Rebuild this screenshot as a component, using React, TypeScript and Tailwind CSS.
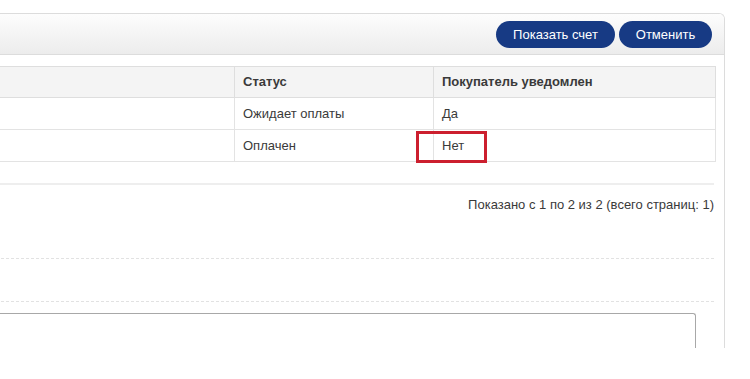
import React from "react";

export default function App() {
  const font = { fontFamily: '"Liberation Sans", Arial, sans-serif' };
  return (
    <div className="relative w-[750px] h-[379px] overflow-hidden bg-white text-[13px] text-[#3a3a3a]" style={font}>
      <div className="pt-[13px]">
        <div className="ml-[-30px] w-[755px] h-[335px] border-t border-r border-l border-[#dcdcdc] rounded-tr-[6px] overflow-hidden flex flex-col">
          <div className="h-[41px] shrink-0 flex items-center justify-end gap-[4px] pr-[12px] bg-gradient-to-b from-[#fdfdfd] to-[#ececec] border-b border-[#dcdcdc]">
            <button className="w-[119px] h-[27px] rounded-full bg-[#173a84] text-white text-[13px] leading-none">Показать счет</button>
            <button className="w-[93px] h-[27px] rounded-full bg-[#173a84] text-white text-[13px] leading-none">Отменить</button>
          </div>
          <div className="flex-1 flex flex-col pl-[10px] pr-[10px] pt-[11px]">
            <table className="w-[734px] border-collapse table-fixed">
              <colgroup>
                <col className="w-[253px]" />
                <col className="w-[199px]" />
                <col className="w-[282px]" />
              </colgroup>
              <thead>
                <tr className="h-[31px] bg-[#f4f4f4]">
                  <th className="border border-[#dedede]"></th>
                  <th className="border border-[#dedede] text-left font-bold pl-[8px]">Статус</th>
                  <th className="border border-[#dedede] text-left font-bold pl-[8px]">Покупатель уведомлен</th>
                </tr>
              </thead>
              <tbody>
                <tr className="h-[32px]">
                  <td className="border border-[#e3e3e3]"></td>
                  <td className="border border-[#e3e3e3] pl-[8px]">Ожидает оплаты</td>
                  <td className="border border-[#e3e3e3] pl-[8px]">Да</td>
                </tr>
                <tr className="h-[32px]">
                  <td className="border border-[#e3e3e3]"></td>
                  <td className="border border-[#e3e3e3] pl-[8px]">Оплачен</td>
                  <td className="border border-[#e3e3e3] pl-[8px]">Нет</td>
                </tr>
              </tbody>
            </table>
            <div className="mt-[21px] border-t-2 border-[#eeeeee]"></div>
            <div className="mt-[11px] h-[18px] leading-[18px] text-right text-[13px]">Показано с 1 по 2 из 2 (всего страниц: 1)</div>
            <div className="mt-[44px] border-t border-dashed border-[#e2e2e2]"></div>
            <div className="mt-[42px] border-t border-dashed border-[#e2e2e2]"></div>
            <div className="mt-[11px] mr-[18px] flex-1 border-t border-l border-r border-[#a8a8a8] rounded-tr-[3px]"></div>
          </div>
        </div>
      </div>
      <div className="absolute left-[416px] top-[131px] w-[71px] h-[32px] border-[3px] border-[#cc1f2e]"></div>
    </div>
  );
}
